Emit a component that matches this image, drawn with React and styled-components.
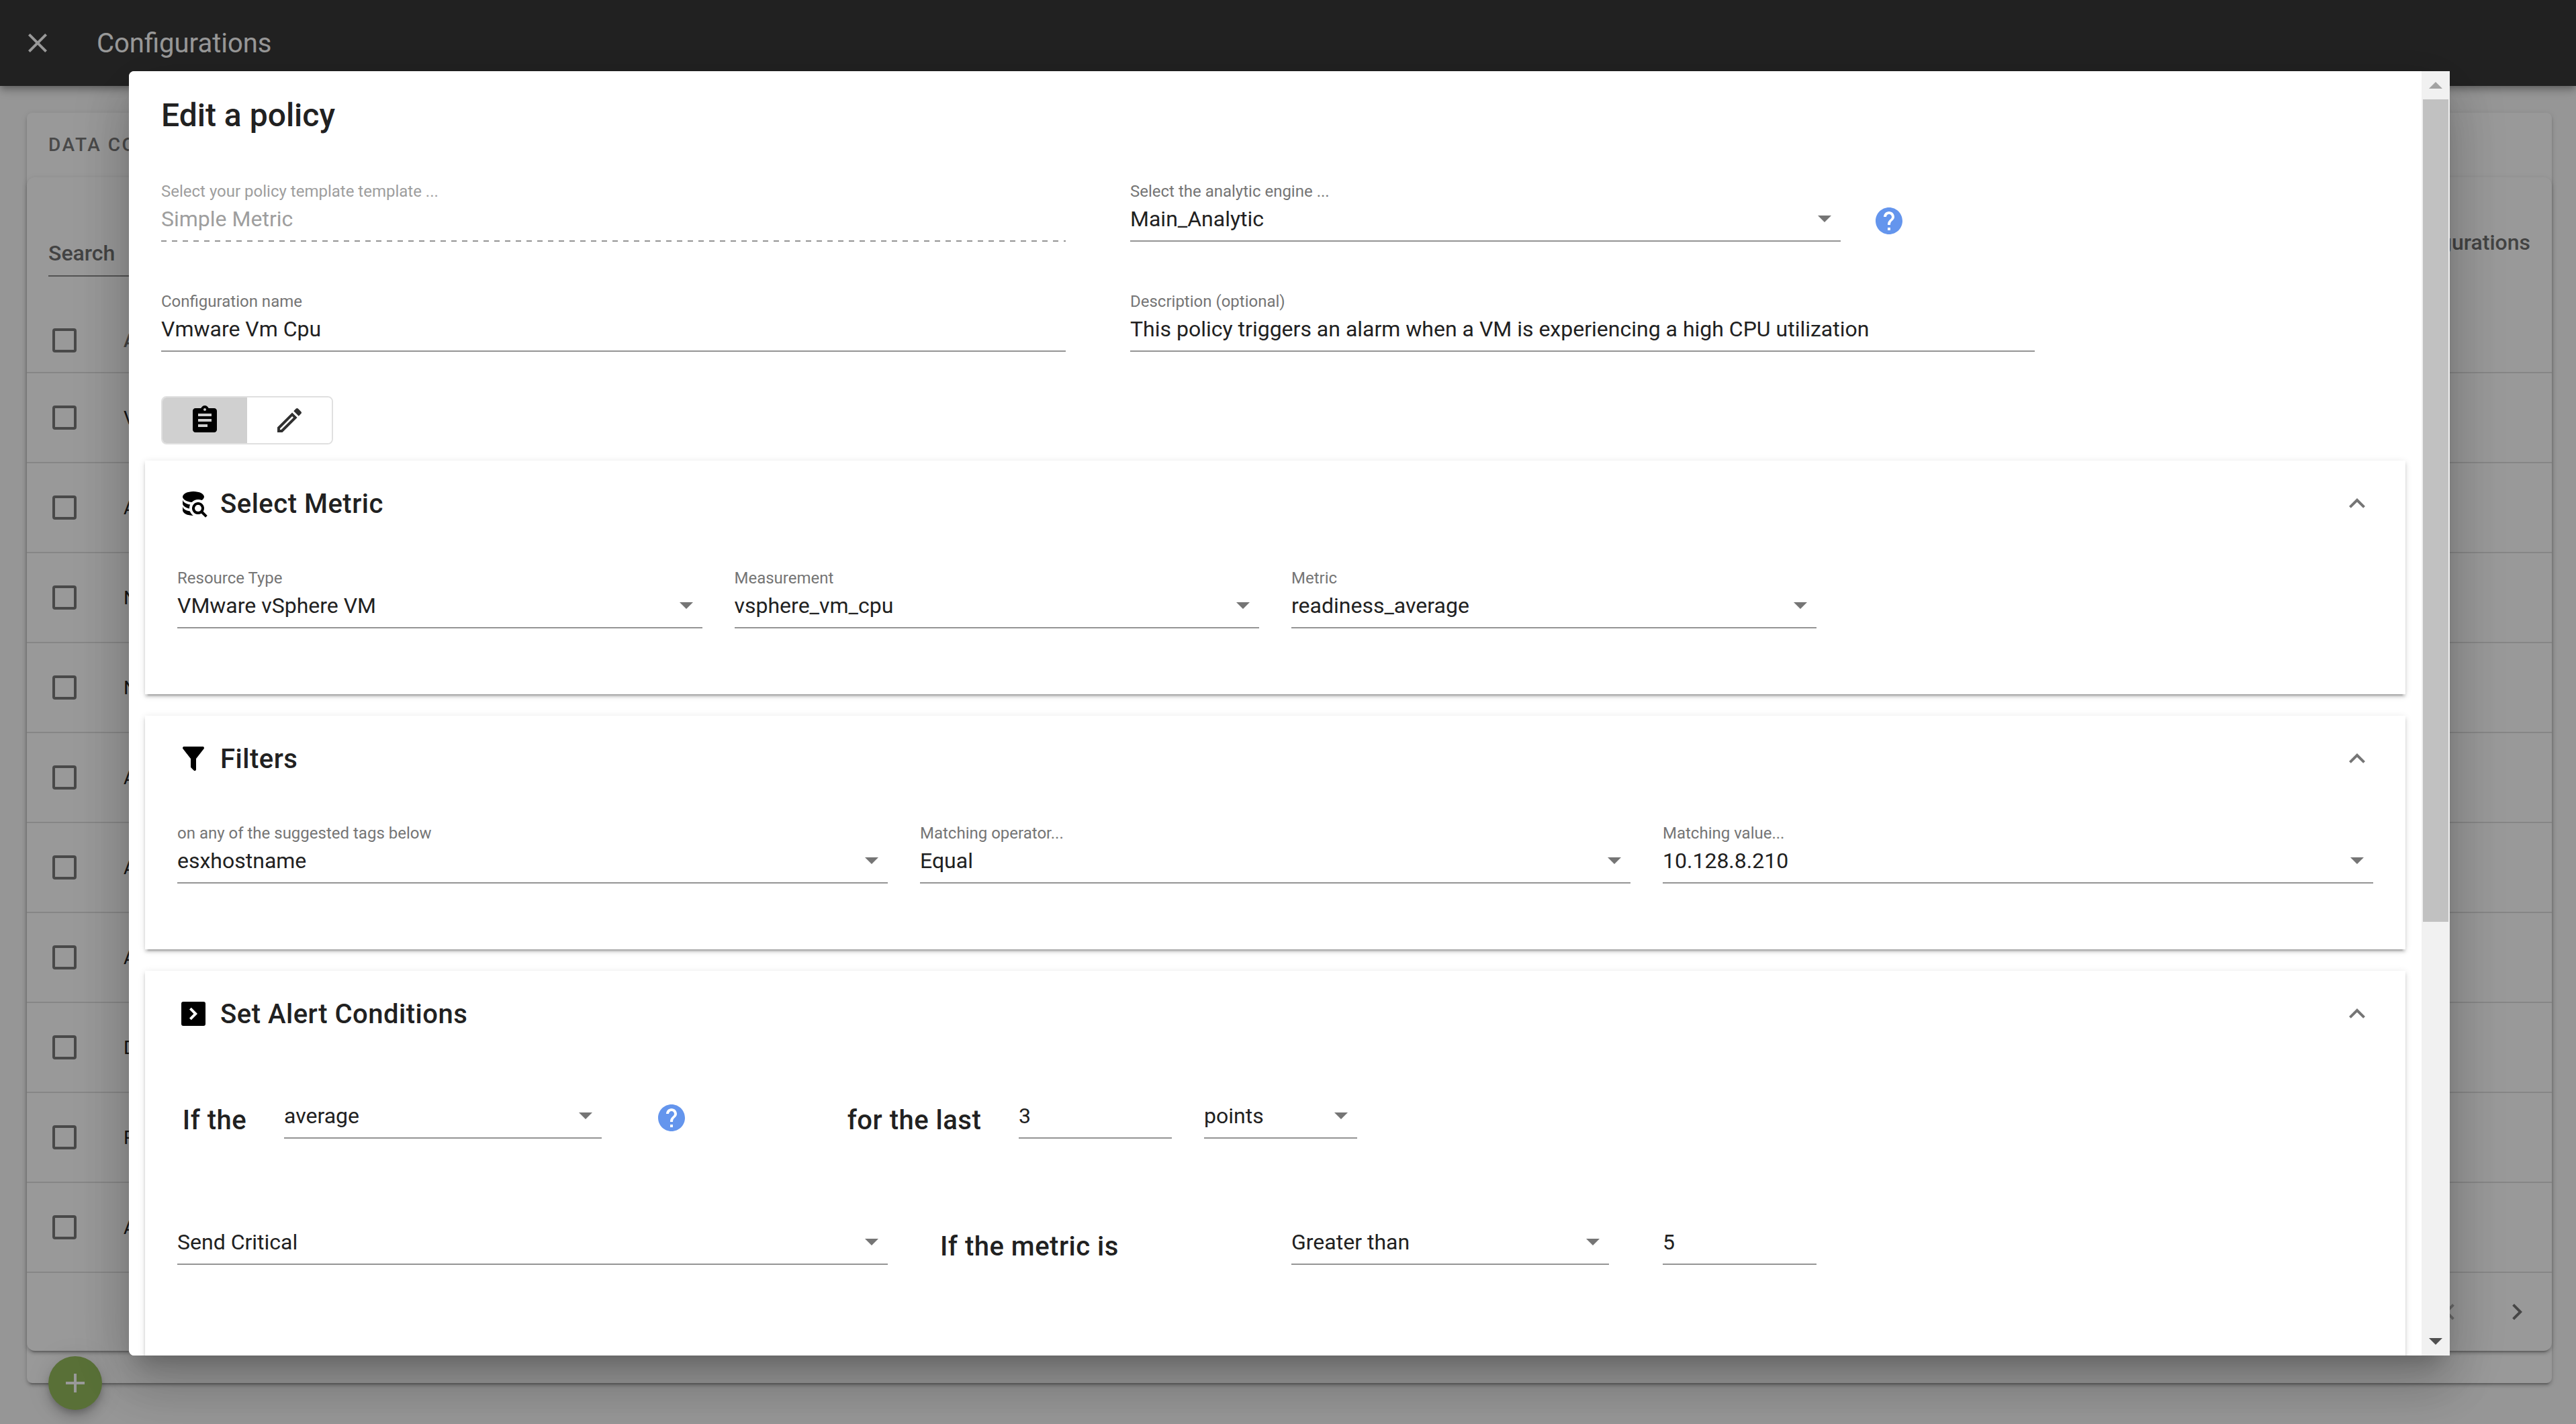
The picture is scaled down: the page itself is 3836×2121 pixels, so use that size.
import React from 'react'
import styled, { createGlobalStyle } from 'styled-components'
import {
  MdAdd,
  MdAssignment,
  MdChevronLeft,
  MdChevronRight,
  MdClose,
  MdExpandLess,
  MdHelp,
} from 'react-icons/md'

const GlobalStyle = createGlobalStyle`
  * {
    box-sizing: border-box;
  }
  body {
    margin: 0;
    overflow: hidden;
    background: #fafafa;
    color: #212121;
    font-family: Roboto, "Liberation Sans", sans-serif;
    font-size: 32px;
  }
  button, input, select {
    margin: 0;
    padding: 0;
    border: 0;
    background: none;
    color: inherit;
    font: inherit;
  }
  h1, h2 {
    margin: 0;
    font-weight: 500;
  }
`;

const Page = styled.div`
  min-height: 100vh;
`;

const Toolbar = styled.header`
  position: relative;
  display: flex;
  align-items: center;
  gap: 64px;
  height: 128px;
  padding: 0 32px;
  background: #383838;
  color: white;
  font-size: 40px;
  box-shadow: 0 4px 8px -2px rgba(0, 0, 0, 0.2), 0 8px 10px rgba(0, 0, 0, 0.14), 0 2px 20px rgba(0, 0, 0, 0.12);
`;

const IconButton = styled.button`
  display: flex;
  color: ${props => props.$color || 'inherit'};
  &:hover {
    cursor: pointer
  }
`;

const raised = '0 6px 2px -4px rgba(0, 0, 0, 0.2), 0 4px 4px rgba(0, 0, 0, 0.14), 0 2px 10px rgba(0, 0, 0, 0.12)';

const Panel = styled.main`
  margin: 40px 36px 0 40px;
  padding-bottom: 48px;
  border-radius: 8px;
  background: white;
  box-shadow: ${raised};
`;

const PanelTitle = styled.div`
  padding: 0 32px;
  line-height: 96px;
  font-size: 28px;
  font-weight: 500;
  letter-spacing: 0.09em;
  color: #7a7a7a;
`;

const TableCard = styled.section`
  border-radius: 12px;
  background: white;
  box-shadow: ${raised};
`;

const TableTools = styled.div`
  display: flex;
  justify-content: space-between;
  align-items: flex-end;
  height: 148px;
  padding: 0 32px;
  color: #707070;
`;

const SearchInput = styled.input`
  width: 400px;
  height: 66px;
  padding-bottom: 2px;
  border-bottom: 2px solid #8a8a8a;
  font-weight: 500;
  &::placeholder {
    color: #707070;
    opacity: 1;
  }
`;

const ToolsLink = styled.a`
  padding-bottom: 32px;
  color: inherit;
  font-weight: 500;
  text-decoration: none;
`;

const Table = styled.table`
  width: 100%;
  margin-top: 48px;
  border-spacing: 0;
  font-size: 28px;
  text-align: left;
  th {
    height: 96px;
    padding: 0;
    border-bottom: 2px solid #e0e0e0;
    color: #707070;
    font-weight: 500;
  }
  td {
    height: 134px;
    padding: 0;
    border-bottom: 2px solid #e0e0e0;
  }
  th:first-child, td:first-child {
    width: 144px;
    padding-left: 38px;
  }
`;

const CheckBox = styled.input`
  display: block;
  appearance: none;
  width: 36px;
  height: 36px;
  border: 4px solid #7a7a7a;
  border-radius: 4px;
`;

const Paginator = styled.div`
  display: flex;
  justify-content: flex-end;
  align-items: center;
  gap: 52px;
  height: 116px;
  padding-right: 28px;
`;

const Fab = styled.button`
  position: fixed;
  left: 72px;
  bottom: 21px;
  display: flex;
  align-items: center;
  justify-content: center;
  width: 80px;
  height: 80px;
  border-radius: 50%;
  background: #94bb5c;
  color: white;
  box-shadow: 0 6px 10px -2px rgba(0, 0, 0, 0.2), 0 12px 20px rgba(0, 0, 0, 0.14), 0 2px 36px rgba(0, 0, 0, 0.12);
`;

const Backdrop = styled.div`
  position: fixed;
  inset: 0;
  display: flex;
  padding: 106px 188px 102px 192px;
  background: rgba(0, 0, 0, 0.4);
`;

const Dialog = styled.div`
  display: flex;
  flex: 1;
  min-width: 0;
  border-radius: 8px 0 0 8px;
  background: linear-gradient(to right, white 50%, #f1f1f1 50%);
  box-shadow: 0 22px 30px -14px rgba(0, 0, 0, 0.2), 0 48px 76px 6px rgba(0, 0, 0, 0.14), 0 18px 92px 16px rgba(0, 0, 0, 0.12);
`;

const DialogBody = styled.div`
  flex: 1;
  min-width: 0;
  padding: 34px 24px;
  overflow-y: auto;
  scrollbar-width: none;
  border-radius: 8px 0 0 8px;
  background: white;
`;

const DialogTitle = styled.h1`
  padding: 0 24px;
  font-size: 48px;
  line-height: 64px;
`;

const PolicyForm = styled.div`
  display: grid;
  grid-template-columns: 1347fr 1347fr 432fr;
  gap: 68px 96px;
  padding: 60px 24px 66px;
`;

const EngineCell = styled.div`
  display: grid;
  grid-template-columns: 1057fr 241fr;
  gap: 48px;
`;

const FieldBox = styled.label`
  display: block;
  grid-column: ${props => props.$column || 'auto'};
  min-width: 0;
  margin-right: ${props => props.$inset || '0'};
`;

const FieldLabel = styled.span`
  display: block;
  height: 42px;
  line-height: 42px;
  font-size: 24px;
  color: ${props => props.$disabled ? '#9e9e9e' : '#757575'};
`;

const FieldControl = styled.span`
  display: grid;
  align-items: center;
  height: 54px;
  padding-bottom: 12px;
  border-bottom: 2px solid #949494;
`;

const DisabledControl = styled(FieldControl)`
  padding-bottom: 14px;
  border-bottom: 0;
  color: #9e9e9e;
  background: repeating-linear-gradient(to right, #949494 0 8px, transparent 8px 16px) bottom / 100% 2px no-repeat;
`;

const TextInput = styled.input`
  grid-area: 1 / 1;
  width: 100%;
  height: 40px;
  outline: none;
`;

const SelectInput = styled.select`
  grid-area: 1 / 1;
  width: 100%;
  height: 40px;
  appearance: none;
  outline: none;
  opacity: 1;
`;

const Arrow = styled.span`
  grid-area: 1 / 1;
  justify-self: end;
  margin-right: 14px;
  border: 10px solid transparent;
  border-top-color: #757575;
  border-bottom-width: 0;
  pointer-events: none;
`;

const ModeSwitch = styled.div`
  display: inline-flex;
  margin: 0 24px 24px;
  border: 2px solid #e0e0e0;
  border-radius: 8px;
  overflow: hidden;
  vertical-align: top;
`;

const ModeButton = styled.button`
  display: flex;
  align-items: center;
  justify-content: center;
  width: 126px;
  height: 68px;
  color: ${props => props.$active ? 'black' : '#303030'};
  background: ${props => props.$active ? '#d0d0d0' : 'white'};
`;

const Card = styled.section`
  margin-bottom: 32px;
  background: white;
  box-shadow: ${raised};
`;

const CardHeader = styled.div`
  display: flex;
  align-items: center;
  gap: 16px;
  height: 128px;
  padding: 0 48px;
  color: black;
`;

const CardTitle = styled.h2`
  flex: 1;
  font-size: 40px;
  letter-spacing: 0.0125em;
  color: #212121;
`;

const CardFields = styled.div`
  display: grid;
  grid-template-columns: ${props => props.$columns};
  gap: 48px;
  padding: 26px 48px 98px;
`;

const ConditionRow = styled(CardFields)`
  padding-bottom: 92px;
  & + & {
    padding-top: 0;
  }
  &:last-child {
    padding-bottom: 280px;
  }
`;

const Phrase = styled.div`
  grid-column: ${props => props.$column || 'auto'};
  padding-top: 45px;
  padding-left: ${props => props.$indent || '0'};
  line-height: 48px;
  font-size: 40px;
  font-weight: 500;
  letter-spacing: 0.0125em;
  text-align: ${props => props.$indent ? 'left' : 'center'};
  white-space: nowrap;
`;

const HelpCell = styled.div`
  display: flex;
  align-items: flex-start;
  padding-top: 41px;
  padding-left: ${props => props.$indent || '0'};
`;

const Scrollbar = styled.div`
  display: flex;
  flex-direction: column;
  width: 42px;
  background: #f1f1f1;
`;

const ScrollButton = styled.button`
  display: flex;
  align-items: center;
  justify-content: center;
  height: 42px;
  color: ${props => props.$color};
`;

const ScrollTrack = styled.div`
  flex: 1;
  padding: 0 2px;
`;

const ScrollThumb = styled.div`
  height: 67%;
  background: #c1c1c1;
`;

const Svg = ({ d, size = 48 }) => (
  <svg width={size} height={size} viewBox="0 0 24 24" fill="currentColor" aria-hidden="true">
    <path d={d} />
  </svg>
)

const icons = {
  pencil: 'M14.06,9L15,9.94L5.92,19H5V18.08L14.06,9M17.66,3C17.41,3 17.15,3.1 16.96,3.29L15.13,5.12L18.88,8.87L20.71,7.04C21.1,6.65 21.1,6 20.71,5.63L18.37,3.29C18.17,3.09 17.92,3 17.66,3M14.06,6.19L3,17.25V21H6.75L17.81,9.94L14.06,6.19Z',
  database: 'M18.68,12.32C16.92,10.56 14.07,10.57 12.32,12.33C10.56,14.09 10.56,16.94 12.32,18.69C13.81,20.17 16.11,20.43 17.89,19.32L21,22.39L22.39,21L19.3,17.89C20.43,16.12 20.17,13.8 18.68,12.32M17.27,17.27C16.29,18.25 14.71,18.24 13.73,17.27C12.76,16.29 12.76,14.71 13.74,13.73C14.71,12.76 16.29,12.76 17.27,13.73C18.24,14.71 18.24,16.29 17.27,17.27M10.9,20.1C10.25,19.44 9.74,18.65 9.42,17.78C6.27,17.25 4,15.76 4,14V17C4,19.21 7.58,21 12,21V21C11.6,20.74 11.23,20.44 10.9,20.1M4,9V12C4,13.68 6.07,15.12 9,15.7C9,15.63 9,15.57 9,15.5C9,14.57 9.2,13.65 9.58,12.81C6.34,12.3 4,10.79 4,9M12,3C7.58,3 4,4.79 4,7C4,9 7,10.68 10.85,11H10.9C12.1,9.74 13.76,9 15.5,9C16.41,9 17.31,9.19 18.14,9.56C19.17,9.09 19.87,8.12 20,7C20,4.79 16.42,3 12,3Z',
  filter: 'M14,12V19.88C14.04,20.18 13.94,20.5 13.71,20.71C13.32,21.1 12.69,21.1 12.3,20.71L10.29,18.7C10.06,18.47 9.96,18.16 10,17.87V12H9.97L4.21,4.62C3.87,4.19 3.95,3.56 4.38,3.22C4.57,3.08 4.78,3 5,3H19C19.22,3 19.43,3.08 19.62,3.22C20.05,3.56 20.13,4.19 19.79,4.62L14.03,12H14Z',
  chevronBox: 'M4.5,3H19.5A1.5,1.5 0 0,1 21,4.5V19.5A1.5,1.5 0 0,1 19.5,21H4.5A1.5,1.5 0 0,1 3,19.5V4.5A1.5,1.5 0 0,1 4.5,3M10.4,16.6L15,12L10.4,7.4L9,8.8L12.2,12L9,15.2L10.4,16.6Z',
  scrollUp: 'M2,17L12,7L22,17Z',
  scrollDown: 'M2,7L12,17L22,7Z',
}

const policies = [
  'VM',
  'API',
  'NFS',
  'NTP',
  'App',
  'Agent',
  'Array',
  'Disk',
  'RAM',
  'Alarm',
]

function TextField({ label, name, value, ...rest }) {
  return (
    <FieldBox {...rest}>
      <FieldLabel>{label}</FieldLabel>
      <FieldControl>
        <TextInput aria-label={label || name} defaultValue={value} />
      </FieldControl>
    </FieldBox>
  )
}

function SelectField({ label, name, value, ...rest }) {
  return (
    <FieldBox {...rest}>
      <FieldLabel>{label}</FieldLabel>
      <FieldControl>
        <SelectInput aria-label={label || name} defaultValue={value}>
          <option>{value}</option>
        </SelectInput>
        <Arrow />
      </FieldControl>
    </FieldBox>
  )
}

function Help({ indent }) {
  return (
    <HelpCell $indent={indent}>
      <IconButton aria-label="Help" $color="#6495ed"><MdHelp size={48} /></IconButton>
    </HelpCell>
  )
}

function Section({ icon, title, children }) {
  return (
    <Card>
      <CardHeader>
        <Svg d={icon} />
        <CardTitle>{title}</CardTitle>
        <IconButton aria-label={`Collapse ${title}`} $color="#757575"><MdExpandLess size={48} /></IconButton>
      </CardHeader>
      {children}
    </Card>
  )
}

function Configurations() {
  return (
    <Page>
      <Toolbar>
        <IconButton aria-label="Close"><MdClose size={48} /></IconButton>
        <span>Configurations</span>
      </Toolbar>
      <Panel>
        <PanelTitle>DATA COLLECTION</PanelTitle>
        <TableCard>
          <TableTools>
            <SearchInput placeholder="Search" aria-label="Search" />
            <ToolsLink href="#configurations">Configurations</ToolsLink>
          </TableTools>
          <Table>
            <thead>
              <tr>
                <th><CheckBox type="checkbox" aria-label="Select all" /></th>
                <th>Alert</th>
              </tr>
            </thead>
            <tbody>
              {policies.map(policy => (
                <tr key={policy}>
                  <td><CheckBox type="checkbox" aria-label={policy} /></td>
                  <td>{policy}</td>
                </tr>
              ))}
            </tbody>
          </Table>
          <Paginator>
            <IconButton aria-label="Previous page" $color="#b0b0b0"><MdChevronLeft size={48} /></IconButton>
            <IconButton aria-label="Next page" $color="#757575"><MdChevronRight size={48} /></IconButton>
          </Paginator>
        </TableCard>
      </Panel>
      <Fab aria-label="Add"><MdAdd size={48} /></Fab>
    </Page>
  )
}

function EditPolicy() {
  return (
    <Dialog role="dialog" aria-label="Edit a policy">
      <DialogBody>
        <DialogTitle>Edit a policy</DialogTitle>
        <PolicyForm>
          <FieldBox $column="1">
            <FieldLabel $disabled>Select your policy template template ...</FieldLabel>
            <DisabledControl>
              <SelectInput disabled defaultValue="Simple Metric">
                <option>Simple Metric</option>
              </SelectInput>
            </DisabledControl>
          </FieldBox>
          <EngineCell>
            <SelectField label="Select the analytic engine ..." value="Main_Analytic" />
            <Help />
          </EngineCell>
          <TextField $column="1" label="Configuration name" value="Vmware Vm Cpu" />
          <TextField
            label="Description (optional)"
            value="This policy triggers an alarm when a VM is experiencing a high CPU utilization"
          />
        </PolicyForm>
        <ModeSwitch>
          <ModeButton $active aria-label="Form"><MdAssignment size={48} /></ModeButton>
          <ModeButton aria-label="Edit"><Svg d={icons.pencil} /></ModeButton>
        </ModeSwitch>
        <Section icon={icons.database} title="Select Metric">
          <CardFields $columns="repeat(4, 1fr)">
            <SelectField label="Resource Type" value="VMware vSphere VM" />
            <SelectField label="Measurement" value="vsphere_vm_cpu" />
            <SelectField label="Metric" value="readiness_average" />
          </CardFields>
        </Section>
        <Section icon={icons.filter} title="Filters">
          <CardFields $columns="repeat(3, 1fr)">
            <SelectField label="on any of the suggested tags below" value="esxhostname" />
            <SelectField label="Matching operator..." value="Equal" />
            <SelectField label="Matching value..." value="10.128.8.210" />
          </CardFields>
        </Section>
        <Section icon={icons.chevronBox} title="Set Alert Conditions">
          <ConditionRow $columns="111fr 473fr 262fr 215fr 228fr 228fr 1465fr">
            <Phrase>If the</Phrase>
            <SelectField name="Function" value="average" />
            <Help indent="32px" />
            <Phrase>for the last</Phrase>
            <TextField name="Count" value="3" />
            <SelectField name="Unit" value="points" />
          </ConditionRow>
          <ConditionRow $columns="repeat(12, 1fr)">
            <SelectField $column="span 4" name="Severity" value="Send Critical" />
            <Phrase $column="span 2" $indent="30px">If the metric is</Phrase>
            <SelectField $column="span 2" $inset="32px" name="Operator" value="Greater than" />
            <TextField name="Threshold" value="5" />
          </ConditionRow>
        </Section>
      </DialogBody>
      <Scrollbar>
        <ScrollButton aria-label="Scroll up" $color="#a3a3a3"><Svg d={icons.scrollUp} size={24} /></ScrollButton>
        <ScrollTrack><ScrollThumb /></ScrollTrack>
        <ScrollButton aria-label="Scroll down" $color="#505050"><Svg d={icons.scrollDown} size={24} /></ScrollButton>
      </Scrollbar>
    </Dialog>
  )
}

export default function App() {
  return (
    <>
      <GlobalStyle />
      <Configurations />
      <Backdrop>
        <EditPolicy />
      </Backdrop>
    </>
  )
}
